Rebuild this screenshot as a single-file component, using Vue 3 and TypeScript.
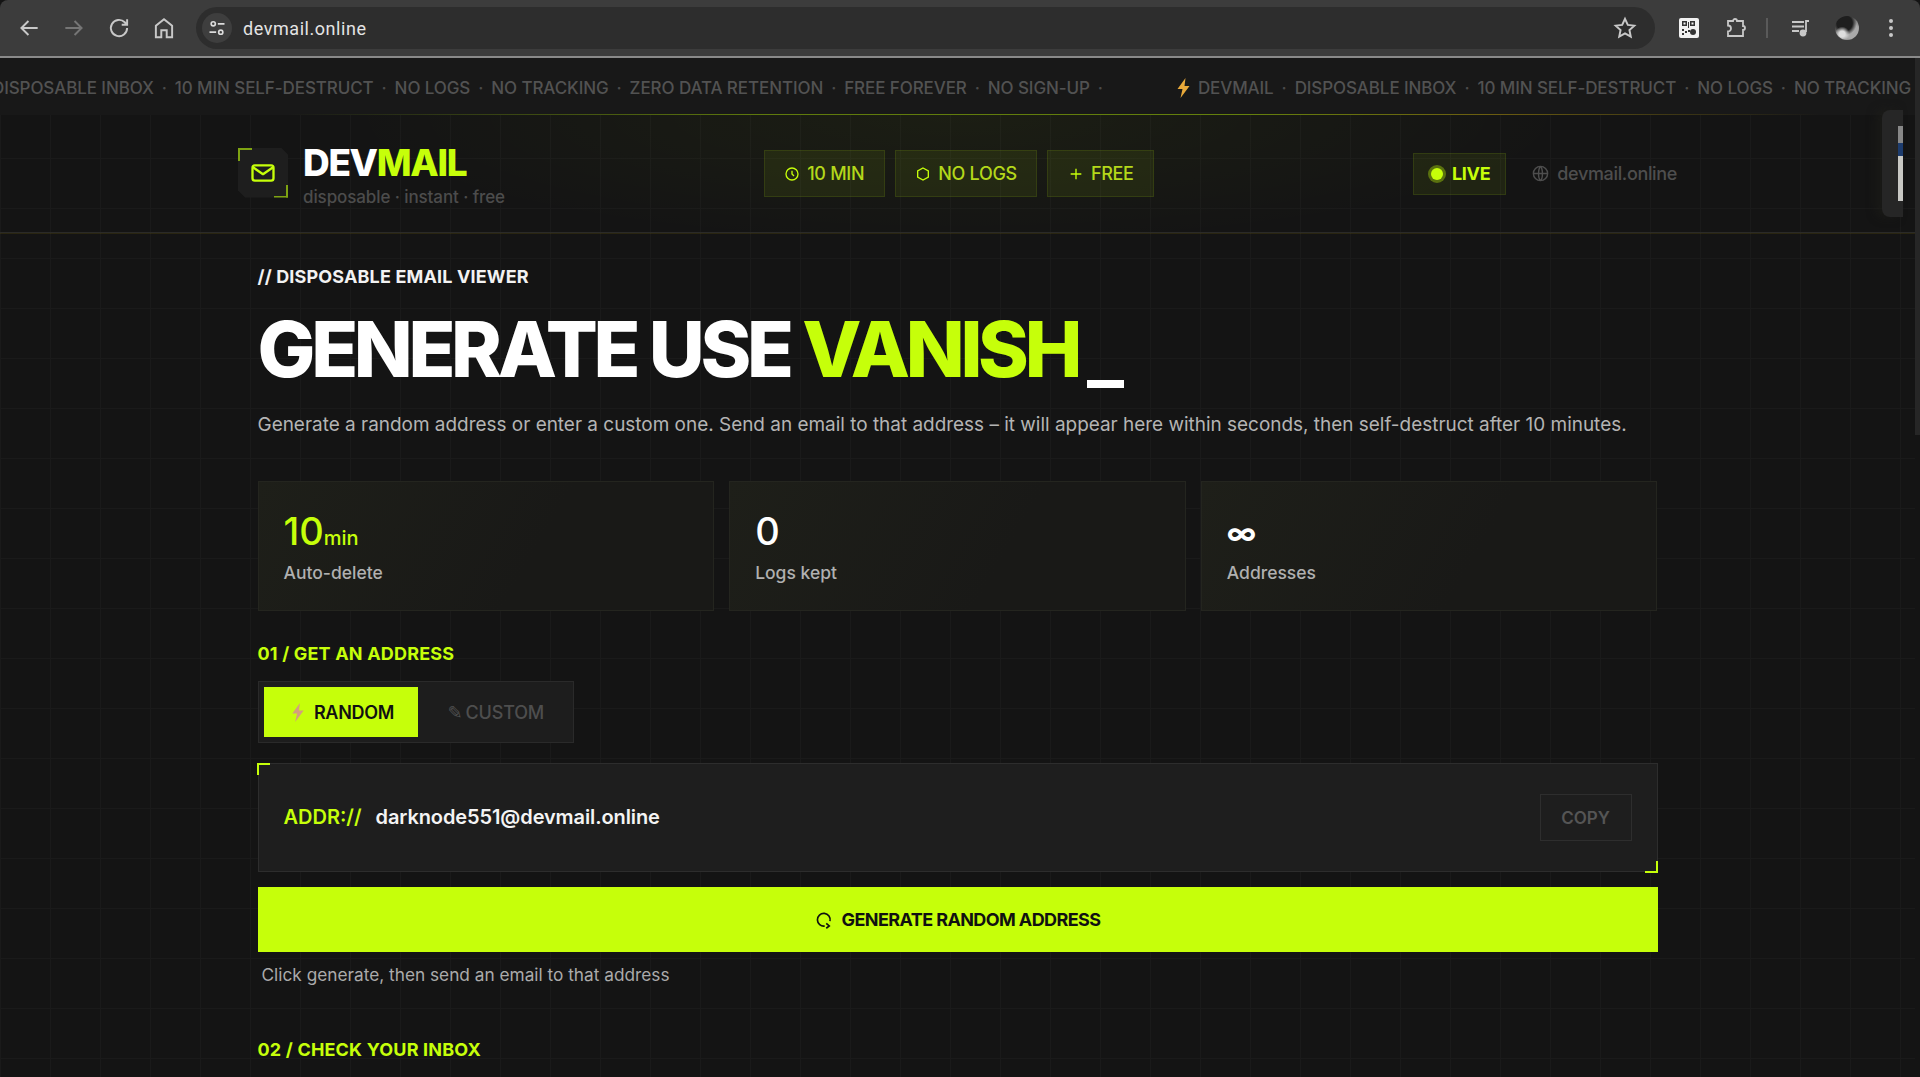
<script setup lang="ts">
const tickerA: string[] = ['DISPOSABLE INBOX', '10 MIN SELF-DESTRUCT', 'NO LOGS', 'NO TRACKING', 'ZERO DATA RETENTION', 'FREE FOREVER', 'NO SIGN-UP']
const tickerB: string[] = ['DEVMAIL', 'DISPOSABLE INBOX', '10 MIN SELF-DESTRUCT', 'NO LOGS', 'NO TRACKING']
</script>

<template>
  <div class="app">
    <div class="chrome">
      <div class="nav">
        <svg class="ci" viewBox="0 0 24 24"><path d="M20 12H5M11.500 5.500 5 12l6.500 6.500" /></svg>
        <svg class="ci dim" viewBox="0 0 24 24"><path d="M4 12h15M12.500 5.500 19 12l-6.500 6.500" /></svg>
        <svg class="ci" viewBox="0 0 24 24"><path d="M19.500 12a7.500 7.500 0 1 1-2.200-5.300L19.500 9M19.500 4v5h-5" /></svg>
        <svg class="ci" viewBox="0 0 24 24"><path d="M4.500 20.500V10L12 4l7.500 6v10.500h-5V14h-5v6.500z" /></svg>
      </div>
      <div class="omni">
        <span class="tune">
          <svg viewBox="0 0 24 24"><circle cx="7.500" cy="7" r="2.500" /><path d="M13 7h8M3 17h8" /><circle cx="16.500" cy="17" r="2.500" /></svg>
        </span>
        <span class="url">devmail.online</span>
        <svg class="ci star" viewBox="0 0 24 24"><path d="m12 3.500 2.600 5.600 6 .7-4.500 4.100 1.200 6L12 16.900l-5.300 3 1.200-6-4.500-4.100 6-.7z" /></svg>
      </div>
      <div class="tools">
        <svg class="qr" viewBox="0 0 20 20">
          <rect width="20" height="20" rx="2" fill="#f1f1f1" />
          <path d="M3 3h5v5H3zM4.500 4.500v2h2v-2zM11 3h5v5h-5zM12.500 4.500v2h2v-2zM3 11h2v2H3zM6 13h2v2H6zM3 15h2v2H3zM9 4h1v6H9zM9 12h2v2H9z" fill="#333" fill-rule="evenodd" />
          <circle cx="14" cy="14" r="3" fill="#333" />
        </svg>
        <svg class="ci puzzle" viewBox="0 0 24 24"><path d="M5 5h5a2 2 0 0 1 4 0h6v5a2 2 0 0 1 0 4v6H5v-4.500a3 3 0 0 0 0-6z" /></svg>
        <span class="sep"></span>
        <svg class="ci" viewBox="0 0 24 24"><path d="M3 6h12M3 10.500h12M3 15h7M20 5h-3v11" /><circle cx="14" cy="17" r="2.500" fill="#c8c8c8" /></svg>
        <span class="avatar"></span>
        <span class="dots"><i></i><i></i><i></i></span>
      </div>
    </div>

    <div class="viewport">
      <div class="page">
        <div class="ticker">
          <div class="track">
            <template v-for="t in tickerA" :key="t">
              <span>{{ t }}</span><span class="sepdot">·</span>
            </template>
            <svg class="bolt" viewBox="0 0 14 20"><path d="M9 0 1 11h5l-2 9 9-12H8z" fill="#e8a93a" /></svg>
            <template v-for="(t, i) in tickerB" :key="i">
              <span>{{ t }}</span><span v-if="i < tickerB.length - 1" class="sepdot">·</span>
            </template>
          </div>
        </div>

        <header class="head">
          <div class="head-in">
            <div class="brand">
              <div class="logo">
                <svg viewBox="0 0 24 24"><rect x="3" y="5.500" width="18" height="13" rx="2" /><path d="m4 7.500 8 5.500 8-5.500" /></svg>
              </div>
              <div class="words">
                <div class="name">DEV<b>MAIL</b></div>
                <div class="tag">disposable · instant · free</div>
              </div>
            </div>
            <div class="pills">
              <span class="pill">
                <svg viewBox="0 0 24 24"><circle cx="12" cy="12" r="9" /><path d="M12 7v5l3 3" /></svg>10 MIN
              </span>
              <span class="pill">
                <svg viewBox="0 0 24 24"><path d="m12 3 8 4.500v9L12 21l-8-4.500v-9z" /></svg>NO LOGS
              </span>
              <span class="pill">
                <svg viewBox="0 0 24 24"><path d="M12 4v16M4 12h16" /></svg>FREE
              </span>
            </div>
            <div class="status">
              <span class="live"><i class="led"></i>LIVE</span>
              <span class="host">
                <svg viewBox="0 0 24 24"><circle cx="12" cy="12" r="9" /><path d="M3 12h18M12 3c3 3 3.500 15 0 18M12 3c-3 3-3.500 15 0 18" /></svg>devmail.online
              </span>
            </div>
          </div>
        </header>

        <main class="main">
          <div class="eyebrow">// DISPOSABLE EMAIL VIEWER</div>
          <h1 class="title">GENERATE USE <em>VANISH</em><span class="cursor"></span></h1>
          <p class="lead">Generate a random address or enter a custom one. Send an email to that address – it will appear here within seconds, then self-destruct after 10 minutes.</p>

          <section class="stats">
            <div class="stat">
              <div class="val lime">10<small>min</small></div>
              <div class="lab">Auto-delete</div>
            </div>
            <div class="stat">
              <div class="val">0</div>
              <div class="lab">Logs kept</div>
            </div>
            <div class="stat">
              <div class="val"><span class="inf">∞</span></div>
              <div class="lab">Addresses</div>
            </div>
          </section>

          <h2 class="sec">01 / GET AN ADDRESS</h2>
          <div class="tabs">
            <button class="tab on">
              <svg class="tbolt" viewBox="0 0 14 20"><path d="M9 0 1 11h5l-2 9 9-12H8z" fill="#d4a07c" /></svg>RANDOM
            </button>
            <button class="tab"><span class="pen">✎</span>CUSTOM</button>
          </div>

          <div class="addr">
            <span class="proto">ADDR://</span>
            <span class="mail">darknode551@devmail.online</span>
            <button class="copy">COPY</button>
          </div>

          <button class="gen">
            <svg viewBox="0 0 24 24"><path d="M13 20A8.500 8.500 0 1 1 20 13.500M15 16.500l4 3.500-4 3" /></svg>GENERATE RANDOM ADDRESS
          </button>
          <p class="hint">Click generate, then send an email to that address</p>

          <h2 class="sec second">02 / CHECK YOUR INBOX</h2>
        </main>
      </div>

      <div class="scrollbar"><i></i></div>
      <div class="mini"><i class="bar"></i></div>
    </div>
  </div>
</template>

<style>
html, body { margin: 0; background: #141414; overflow: hidden; }
</style>

<style scoped>
.app { width: 1920px; height: 1077px; display: flex; flex-direction: column; overflow: hidden; font-family: Inter, "Liberation Sans", sans-serif; color: #fff; }
.chrome { height: 56px; flex: none; display: flex; align-items: center; background: #3c3c3c; border-bottom: 2px solid #8a8a8a; border-radius: 8px 8px 0 0; }
.nav { display: flex; gap: 19px; padding-left: 16px; width: 196px; box-sizing: border-box; flex: none; }
.ci { width: 26px; height: 26px; fill: none; stroke: #c8c8c8; stroke-width: 1.800; flex: none; }
.ci.dim { stroke: #757575; }
.omni { width: 1459px; height: 42px; flex: none; background: #2d2d2d; border-radius: 21px; display: flex; align-items: center; }
.tune { width: 30px; height: 30px; margin-left: 6px; border-radius: 50%; background: #3e3e3e; display: flex; align-items: center; justify-content: center; }
.tune svg { width: 20px; height: 20px; fill: none; stroke: #dcdcdc; stroke-width: 2; }
.url { margin-left: 11px; font-size: 18px; color: #e4e4e4; font-family: Roboto, sans-serif; letter-spacing: .55px; }
.star { margin-left: auto; margin-right: 17px; }
.tools { display: flex; align-items: center; flex: 1; padding-left: 24px; }
.qr { width: 20px; height: 20px; flex: none; margin-right: 24px; }
.tools .ci { width: 24px; height: 24px; }
.sep { width: 2px; height: 20px; background: #5a5a5a; margin: 0 21px 0 19px; }
.avatar { width: 24px; height: 24px; border-radius: 50%; margin-left: 22px; background: radial-gradient(circle at 30% 75%, #ddd 0 12%, transparent 30%), radial-gradient(circle at 40% 30%, #1e1e1e 0 35%, transparent 55%), radial-gradient(circle at 70% 65%, #aaa 0 30%, #666 70%); }
.dots { display: flex; flex-direction: column; gap: 3px; margin-left: 30px; }
.dots i { width: 4px; height: 4px; border-radius: 50%; background: #c8c8c8; }

.viewport { flex: 1; display: flex; position: relative; min-height: 0; }
.page { flex: 1; min-width: 0; background-color: #141414; background-image: linear-gradient(#1a1a1a 1px, transparent 1px), linear-gradient(90deg, #1a1a1a 1px, transparent 1px); background-size: 50px 50px; background-position: 0 0; position: relative; }
.ticker { height: 56px; background: #181818; overflow: hidden; display: flex; align-items: center; border-bottom: 1px solid transparent; border-image: linear-gradient(90deg, transparent 15%, #5f7a0c 40%, #64800c 65%, #6b5c10 78%, transparent 95%) 1; }
.track { display: flex; align-items: center; white-space: nowrap; font-size: 17px; font-weight: 500; letter-spacing: -.09px; color: #525252; margin-left: -8px; padding-top: 3px; }
.sepdot { width: 21px; text-align: center; color: #4a4a4a; }
.bolt { width: 17px; height: 20px; margin: 0 6px 0 64px; flex: none; }

.head { height: 117px; display: flex; align-items: center; justify-content: center; border-bottom: 1px solid #2a2a28; background: radial-gradient(ellipse 620px 130px at 50% 0, rgba(198, 255, 10, .045), transparent); box-shadow: 0 1px 0 rgba(120, 100, 10, .22); }
.head-in { width: 1439px; display: flex; align-items: center; justify-content: space-between; }
.brand { display: flex; align-items: center; gap: 15px; }
.logo { width: 50px; height: 50px; margin-top: -2px; position: relative; box-sizing: border-box; background: #1e1e1e; clip-path: polygon(0 0, 86% 0, 100% 14%, 100% 100%, 14% 100%, 0 86%); display: flex; align-items: center; justify-content: center; }
.logo::before, .logo::after { content: ""; position: absolute; width: 12px; height: 11px; border: 2.500px solid #7ea312; }
.logo::before { left: 0; top: 0; border-right: 0; border-bottom: 0; }
.logo::after { right: 0; bottom: 0; border-left: 0; border-top: 0; }
.logo svg { width: 28px; height: 28px; fill: none; stroke: #c6ff0a; stroke-width: 2; stroke-linejoin: round; stroke-linecap: round; }
.words { padding-top: 5px; }
.name { font-size: 37px; font-weight: 800; letter-spacing: -1.350px; line-height: 38px; }
.name b { color: #c6ff0a; font-weight: 800; }
.tag { font-size: 17px; color: #4c4c4c; font-weight: 500; line-height: 22px; margin-top: 4px; letter-spacing: -.1px; }
.pills { display: flex; gap: 10px; }
.pill { height: 47px; box-sizing: border-box; display: flex; align-items: center; gap: 7px; padding: 0 19.500px; background: rgba(198, 255, 10, .07); border: 1px solid rgba(198, 255, 10, .1); font-size: 18px; font-weight: 500; letter-spacing: -.3px; color: #b4d81a; }
.pill svg { width: 16px; height: 16px; fill: none; stroke: #c6ff0a; stroke-width: 2; }
.status { display: flex; align-items: center; gap: 25px; }
.live { height: 42px; box-sizing: border-box; display: flex; align-items: center; gap: 8px; padding: 0 15px; background: rgba(198, 255, 10, .07); border: 1px solid rgba(198, 255, 10, .1); font-size: 18px; font-weight: 700; color: #c6ff0a; letter-spacing: -.3px; }
.led { width: 12px; height: 12px; border-radius: 50%; background: #c6ff0a; box-shadow: 0 0 0 3px rgba(198, 255, 10, .35); margin: 0 1px 0 2px; }
.host { display: flex; align-items: center; gap: 7px; font-size: 18px; font-weight: 500; letter-spacing: -.35px; color: #4e4e4e; }
.host svg { width: 19px; height: 19px; fill: none; stroke: #4e4e4e; stroke-width: 1.800; }

.main { width: 1400px; margin: 0 auto; }
.eyebrow { margin-top: 33px; font-size: 18px; line-height: 22px; font-weight: 700; letter-spacing: .15px; color: #f2f2f2; }
.title { margin: 16px 0 0; height: 90px; font-size: 77px; line-height: 90px; font-weight: 800; letter-spacing: -4.300px; color: #fff; white-space: nowrap; }
.title em { font-style: normal; color: #c6ff0a; }
.cursor { display: inline-block; width: 37px; height: 8px; background: #fff; margin-left: 9px; vertical-align: -11px; }
.lead { margin: 17px 0 0; font-size: 18.950px; line-height: 28px; color: #b4b4b4; white-space: nowrap; }
.stats { display: grid; grid-template-columns: repeat(3, 1fr); gap: 15px; margin-top: 42px; }
.stat { height: 130px; box-sizing: border-box; padding: 26px 25px 0; border: 1px solid #24251f; background: linear-gradient(120deg, #1e1f19, #191917 60%); }
.val { height: 46px; font-size: 38px; line-height: 46px; font-weight: 500; color: #fff; }
.val.lime { color: #c6ff0a; }
.val small { font-size: 20px; line-height: 1; }
.inf { display: block; font-size: 30px; font-weight: 700; padding-top: 2px; }
.lab { font-size: 17.500px; line-height: 24px; margin-top: 7px; font-weight: 500; color: #b0b0b0; }
.sec { margin: 31px 0 0; font-size: 18px; line-height: 24px; font-weight: 700; letter-spacing: .18px; color: #c6ff0a; }
.sec.second { margin-top: 51px; }
.tabs { display: flex; margin-top: 15px; height: 62px; width: 316px; box-sizing: border-box; padding: 5px; background: #1d1d1d; border: 1px solid #2a2a2a; }
.tab { flex: none; height: 50px; border: 0; display: flex; align-items: center; background: transparent; font: 500 18px Inter, sans-serif; letter-spacing: -.15px; color: #4e4e4e; padding: 0 0 0 30px; gap: 3px; }
.tab.on { background: #c6ff0a; color: #111; width: 154px; justify-content: center; padding: 0 0 0 4px; gap: 9px; font-weight: 600; letter-spacing: -.3px; }
.tbolt { width: 14px; height: 19px; }
.pen { font-family: "DejaVu Sans", sans-serif; }
.addr { margin-top: 20px; height: 109px; box-sizing: border-box; display: flex; align-items: center; padding: 0 25px; background: #1e1e1e; border: 1px solid #2d2d2d; position: relative; }
.addr::before, .addr::after { content: ""; position: absolute; width: 11px; height: 10px; border: 2px solid #c6ff0a; }
.addr::before { left: -2px; top: -1px; border-right: 0; border-bottom: 0; }
.addr::after { right: -1px; bottom: -2px; border-left: 0; border-top: 0; }
.proto { font-size: 20px; font-weight: 600; color: #c6ff0a; margin-bottom: 2px; }
.mail { margin: 0 0 2px 14px; font-size: 20px; font-weight: 600; letter-spacing: -.1px; color: #f4f4f4; }
.copy { margin-left: auto; width: 92px; height: 47px; background: transparent; border: 1px solid #2e2e2e; font: 600 17px Inter, sans-serif; color: #555; }
.gen { margin-top: 15px; width: 100%; height: 65px; border: 0; background: #c6ff0a; color: #111; font: 700 18px Inter, sans-serif; letter-spacing: -.6px; display: flex; align-items: center; justify-content: center; gap: 9px; }
.gen svg { width: 18px; height: 18px; fill: none; stroke: #111; stroke-width: 2.200; }
.hint { margin: 11px 0 0 4px; font-size: 17.250px; line-height: 24px; color: #ababab; }

.scrollbar { width: 5px; flex: none; background: #141414; }
.scrollbar i { display: block; height: 377px; background: #262626; }
.mini { position: absolute; left: 1882px; top: 52px; width: 21px; height: 107px; background: #262626; border-radius: 8px 0 0 8px; box-shadow: -6px 0 10px rgba(30, 30, 25, .6); }
.bar { position: absolute; right: 0; top: 16px; width: 5px; height: 75px; background: linear-gradient(#888 0 23%, #1d3c6e 23% 40%, #c8c8c4 40%); }
</style>
